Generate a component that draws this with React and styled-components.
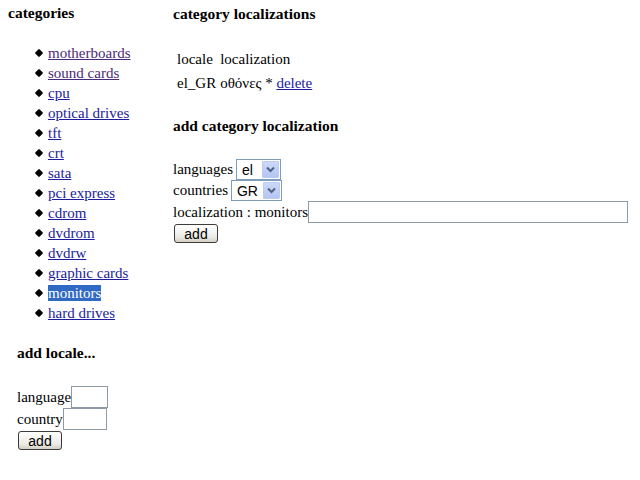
import styled, { createGlobalStyle } from "styled-components";

const GlobalStyle = createGlobalStyle`
  html, body {
    margin: 0;
    padding: 0;
    background: #fff;
    color: #000;
    font-family: "Liberation Serif", "Times New Roman", serif;
    font-size: 15px;
  }
`;

const Page = styled.div`
  display: flex;
  width: 640px;
  height: 480px;
  overflow: hidden;
`;

const Side = styled.div`
  width: 173px;
  flex-shrink: 0;
  padding: 4px 0 0 8px;
  box-sizing: border-box;
`;

const Main = styled.div`
  flex: 1;
  padding: 5px 0 0 0;
`;

const Heading = styled.h3`
  margin: 0;
  font-size: 15.5px;
  font-weight: bold;
  line-height: 18px;
`;

const CatList = styled.ul`
  list-style: none;
  margin: 21px 0 0 0;
  padding: 0 0 0 28px;
`;

const CatItem = styled.li`
  position: relative;
  line-height: 20px;
  padding-left: 12px;

  &::before {
    content: "";
    position: absolute;
    left: 0;
    top: 7px;
    width: 6px;
    height: 6px;
    background: #000;
    transform: rotate(45deg);
    border-radius: 1px;
  }
`;

const Link = styled.a`
  color: ${(p) => (p.$visited ? "#4b2a78" : "#1c1c9c")};
  text-decoration: underline;
  cursor: pointer;
`;

const Selected = styled.span`
  background: #316ac5;
  color: #fff;
`;

const LocaleForm = styled.form`
  margin: 21px 0 0 0;
  padding-left: 9px;
`;

const FormRows = styled.div`
  margin-top: 24px;
  display: flex;
  flex-direction: column;
  align-items: flex-start;
`;

const Row = styled.div`
  display: flex;
  align-items: center;
  height: ${(p) => p.$h || 22}px;
`;

const TextBox = styled.input`
  width: ${(p) => p.$w}px;
  height: 22px;
  box-sizing: border-box;
  border: 1px solid #8d9aa8;
  padding: 0 2px;
  margin: 0;
  font: 14px "Liberation Sans", Arial, sans-serif;
`;

const Button = styled.button`
  width: ${(p) => p.$w || 44}px;
  height: 19px;
  margin-top: 1px;
  margin-left: 1px;
  padding: 0;
  border: 1px solid #3c3c3c;
  border-radius: 3px;
  background: linear-gradient(#ffffff, #ecebe6 70%, #d6d0c5);
  font: 14px "Liberation Sans", Arial, sans-serif;
  color: #000;
`;

const LocTable = styled.table`
  margin-top: 23px;
  border-collapse: separate;
  border-spacing: 2px;
  margin-left: 1px;

  td {
    padding: 1px;
    line-height: 20px;
  }
`;

const AddHeading = styled(Heading)`
  margin-top: 21px;
`;

const SelectBox = styled.div`
  display: inline-flex;
  align-items: center;
  height: 21px;
  box-sizing: border-box;
  border: 1px solid #7f9db9;
  margin-left: 3px;
  font: 14px "Liberation Sans", Arial, sans-serif;
  padding-left: 5px;
  gap: ${(p) => p.$gap}px;
  background: #fff;
`;

const Arrow = styled.span`
  width: 17px;
  height: 17px;
  margin-right: 1px;
  background: linear-gradient(#cdd9f8, #b3c5f3);
  border: 1px solid #bccbf0;
  border-radius: 1px;
  box-sizing: border-box;
  display: flex;
  align-items: center;
  justify-content: center;
`;

const Chevron = () => (
  <svg width="9" height="7" viewBox="0 0 9 7">
    <path d="M1 1.5 L4.5 5 L8 1.5" fill="none" stroke="#4d6185" strokeWidth="2" />
  </svg>
);

const Select = ({ value, gap }) => (
  <SelectBox $gap={gap}>
    <span>{value}</span>
    <Arrow>
      <Chevron />
    </Arrow>
  </SelectBox>
);

const categories = [
  { name: "motherboards", visited: true },
  { name: "sound cards", visited: true },
  { name: "cpu" },
  { name: "optical drives" },
  { name: "tft" },
  { name: "crt" },
  { name: "sata" },
  { name: "pci express" },
  { name: "cdrom" },
  { name: "dvdrom" },
  { name: "dvdrw" },
  { name: "graphic cards" },
  { name: "monitors", selected: true },
  { name: "hard drives" },
];

export default function App() {
  return (
    <>
      <GlobalStyle />
      <Page>
        <Side>
          <Heading>categories</Heading>
          <CatList>
            {categories.map((c) => (
              <CatItem key={c.name}>
                {c.selected ? (
                  <Selected>{c.name}</Selected>
                ) : (
                  <Link $visited={c.visited}>{c.name}</Link>
                )}
              </CatItem>
            ))}
          </CatList>
          <LocaleForm>
            <Heading>add locale...</Heading>
            <FormRows>
              <Row>
                language<TextBox $w={37} />
              </Row>
              <Row>
                country<TextBox $w={44} />
              </Row>
              <Button type="button">add</Button>
            </FormRows>
          </LocaleForm>
        </Side>
        <Main>
          <Heading>category localizations</Heading>
          <LocTable>
            <tbody>
              <tr>
                <td>locale</td>
                <td>localization</td>
              </tr>
              <tr>
                <td>el_GR</td>
                <td>
                  οθόνες * <Link>delete</Link>
                </td>
              </tr>
            </tbody>
          </LocTable>
          <AddHeading>add category localization</AddHeading>
          <FormRows>
            <Row $h={21}>
              languages
              <Select value="el" gap={9} />
            </Row>
            <Row $h={21}>
              countries
              <Select value="GR" gap={5} />
            </Row>
            <Row>
              localization : monitors<TextBox $w={320} />
            </Row>
            <Button type="button">add</Button>
          </FormRows>
        </Main>
      </Page>
    </>
  );
}
